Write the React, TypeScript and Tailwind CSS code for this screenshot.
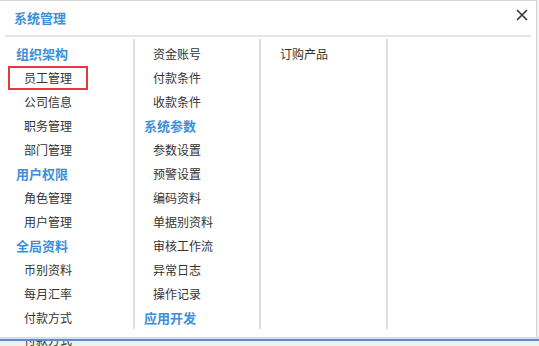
import React from "react";

type Row = { t: string; h?: boolean; sel?: boolean };

const col1: Row[] = [
  { t: "组织架构", h: true },
  { t: "员工管理", sel: true },
  { t: "公司信息" },
  { t: "职务管理" },
  { t: "部门管理" },
  { t: "用户权限", h: true },
  { t: "角色管理" },
  { t: "用户管理" },
  { t: "全局资料", h: true },
  { t: "币别资料" },
  { t: "每月汇率" },
  { t: "付款方式" },
];

const col2: Row[] = [
  { t: "资金账号" },
  { t: "付款条件" },
  { t: "收款条件" },
  { t: "系统参数", h: true },
  { t: "参数设置" },
  { t: "预警设置" },
  { t: "编码资料" },
  { t: "单据别资料" },
  { t: "审核工作流" },
  { t: "异常日志" },
  { t: "操作记录" },
  { t: "应用开发", h: true },
];

const col3: Row[] = [{ t: "订购产品" }];

function Column({ rows, hp, ip, w, border }: { rows: Row[]; hp: string; ip: string; w: string; border: boolean }) {
  return (
    <div className={`${w} h-[290px] pt-[3px] ${border ? "border-r-2 border-[#dedede]" : ""}`}>
      {rows.map((r, i) =>
        r.h ? (
          <div key={i} className={`h-[24px] flex items-center ${hp} text-[13px] font-bold text-[#3d8fd9]`}>
            {r.t}
          </div>
        ) : (
          <div
            key={i}
            className={`h-[24px] w-[80px] flex items-center ${ip} text-[12px] text-[#333333] border-2 ${
              r.sel ? "border-[#e0393e]" : "border-transparent"
            }`}
          >
            {r.t}
          </div>
        )
      )}
    </div>
  );
}

export default function App() {
  return (
    <div
      className="w-[539px] h-[346px] bg-[#f0f0f0] overflow-hidden flex flex-col"
      style={{ fontFamily: '"Noto Sans CJK SC", "Noto Sans", sans-serif' }}
    >
      <div className="w-[537px] h-[337px] bg-white border-t border-r border-[#d4d4d4] flex flex-col">
        <div className="h-[34px] flex items-center justify-between pl-[14px] pr-[8px]">
          <span className="text-[13px] font-bold text-[#3d8fd9]">系统管理</span>
          <svg width="12" height="12" viewBox="0 0 12 12" className="mb-[6px]">
            <path d="M1 1L11 11M11 1L1 11" stroke="#333" strokeWidth="1.6" />
          </svg>
        </div>
        <div className="mx-[5px] h-[2px] bg-[#e4e4e4]" />
        <div className="flex mt-[2px]">
          <div className="pl-[8px] flex">
            <Column rows={col1} w="w-[127px]" hp="pl-[8px]" ip="pl-[14px]" border />
          </div>
          <Column rows={col2} w="w-[126px]" hp="pl-[9px]" ip="pl-[16px]" border />
          <Column rows={col3} w="w-[127px]" hp="pl-[10px]" ip="pl-[17px]" border />
          <div className="flex-1" />
        </div>
      </div>
      <div className="h-[2px] bg-[#cfe0f2]" />
      <div className="h-[2px] bg-[#5b8fc9]" />
      <div className="relative flex-1 overflow-hidden">
        <span className="absolute left-[24px] top-[-9px] text-[12px] leading-[16px] text-[#333]">付款方式</span>
      </div>
    </div>
  );
}
